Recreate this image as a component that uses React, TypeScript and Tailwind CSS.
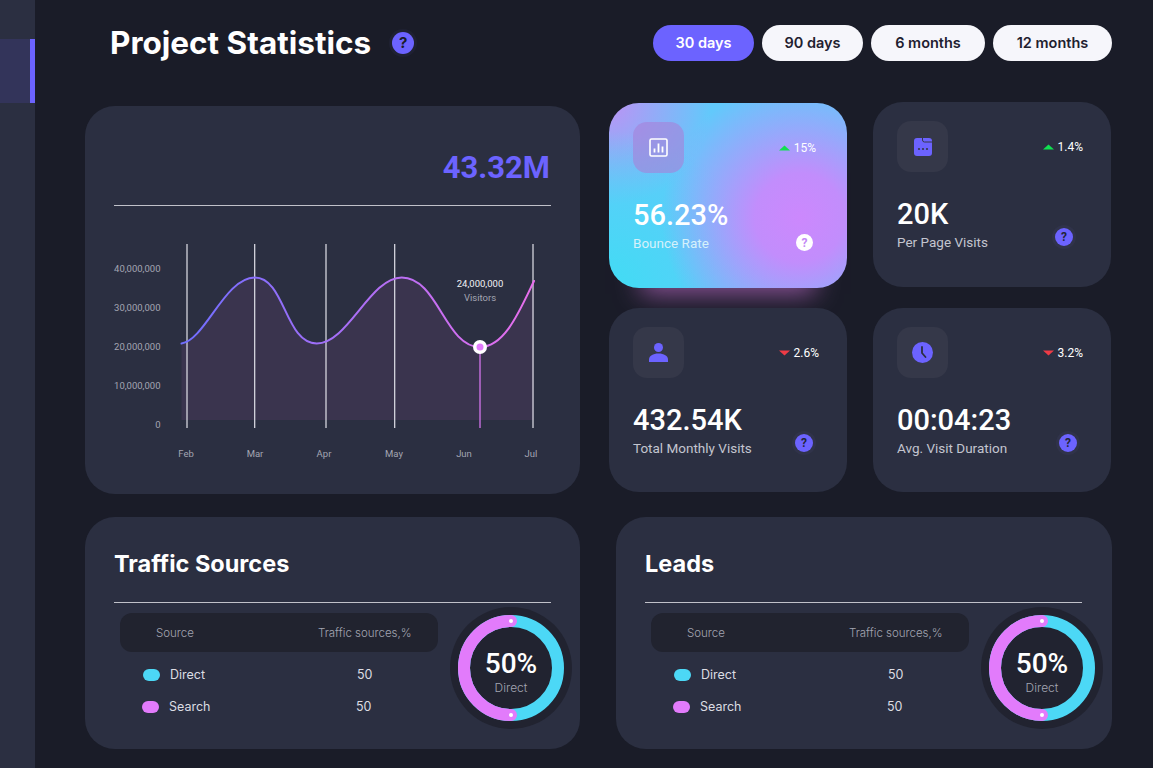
import type { ReactNode } from 'react';

function HelpBadge({ light = false }: { light?: boolean }) {
  if (light) {
    return (
      <span className="flex h-[17px] w-[17px] items-center justify-center rounded-full bg-white text-[12px] font-bold text-[#c48bf5]">
        ?
      </span>
    );
  }
  return (
    <span className="flex h-[24px] w-[24px] items-center justify-center rounded-full bg-[#30334a]">
      <span className="flex h-[18px] w-[18px] items-center justify-center rounded-full bg-[#6c63ff] text-[12px] font-bold text-[#23253a]">
        ?
      </span>
    </span>
  );
}

function Delta({ value, up }: { value: string; up: boolean }) {
  return (
    <div className="flex items-center gap-[4px]">
      <svg width="11" height="6" viewBox="0 0 11 6">
        {up ? <path d="M0 5.500 L5.500 0.500 L11 5.500Z" fill="#10e050" /> : <path d="M0 .5 L11 .5 L5.500 5.500Z" fill="#ee3b46" />}
      </svg>
      <span className="text-[12px] leading-none [font-weight:450]">{value}</span>
    </div>
  );
}

type TileProps = {
  icon: ReactNode;
  value: string;
  label: string;
  delta: string;
  up: boolean;
  badgeClass: string;
  className: string;
};

function Tile({ icon, value, label, delta, up, badgeClass, className }: TileProps) {
  return (
    <div className={`rounded-[30px] bg-[#2b2f41] pl-[24px] pt-[19px] text-white ${className}`}>
      <div className="flex h-[51px] items-center justify-between pr-[28px]">
        <div className="flex h-[51px] w-[51px] items-center justify-center rounded-[14px] bg-[#353849]">{icon}</div>
        <Delta value={delta} up={up} />
      </div>
      <div className="mt-[25px] flex items-end justify-between">
        <div>
          <div className="text-[29px] font-medium leading-[34px]">{value}</div>
          <div className="mt-[2px] text-[13.5px] leading-[18px] text-[#c3c5cf]">{label}</div>
        </div>
        <div className={badgeClass}>
          <HelpBadge />
        </div>
      </div>
    </div>
  );
}

function Donut() {
  return (
    <div className="relative h-[122px] w-[122px] shrink-0">
      <svg width="122" height="122" viewBox="0 0 122 122">
        <circle cx="61" cy="61" r="61" fill="#212330" />
        <circle cx="61" cy="61" r="47" fill="none" stroke="#4cd8f6" strokeWidth="12" />
        <path d="M61 14 A47 47 0 0 0 61 108" fill="none" stroke="#e27bfb" strokeWidth="12" strokeLinecap="round" />
        <circle cx="61" cy="14" r="2" fill="#fff" />
        <circle cx="61" cy="108" r="2" fill="#fff" />
      </svg>
      <div className="absolute inset-0 flex flex-col items-center pt-[43px] font-['Roboto',sans-serif] text-white">
        <span className="text-[28px] font-medium leading-[28px]">50%</span>
        <span className="mt-[3px] font-['Inter',sans-serif] text-[12px] font-light leading-[14px] text-[#a3a5b2]">Direct</span>
      </div>
    </div>
  );
}

function SourceCard({ title, className }: { title: string; className: string }) {
  return (
    <div className={`h-[232px] rounded-[30px] bg-[#2b2f41] font-['Inter',sans-serif] ${className}`}>
      <h2 className="pl-[29px] pt-[32px] text-[23.5px] font-bold leading-[30px] text-white">{title}</h2>
      <div className="ml-[29px] mt-[23px] h-px w-[437px] bg-[#c0c1c9]" />
      <div className="mt-[4px] flex items-start pl-[35px]">
        <div className="mt-[6px] w-[318px] text-[12.5px]">
          <div className="flex h-[39px] items-center rounded-[12px] bg-[#21232f] pl-[36px] pt-[3px] text-[11.5px] font-light text-[#a3a5b2]">
            <span className="w-[162px]">Source</span>
            <span>Traffic sources,%</span>
          </div>
          <div className="mt-[14px] flex h-[18px] items-center pl-[23px] text-[#dcdde3]">
            <span className="h-[12px] w-[17px] rounded-[6px] bg-[#4cd8f6]" />
            <span className="ml-[10px] w-[187px]">Direct</span>
            <span>50</span>
          </div>
          <div className="mt-[14px] flex h-[18px] items-center pl-[22px] text-[#dcdde3]">
            <span className="h-[12px] w-[17px] rounded-[6px] bg-[#e27bfb]" />
            <span className="ml-[10px] w-[187px]">Search</span>
            <span>50</span>
          </div>
        </div>
        <div className="ml-[12px]">
          <Donut />
        </div>
      </div>
    </div>
  );
}

const curve =
  'M181.500 343.500 C205 340 225 277.500 254.700 277.500 C285 277.500 285 343.500 316.700 343.500 C348 343.500 370 277.500 401.700 277.500 C438 277.500 445 347 480 347 C505 347 520 310 534 281';

function VisitsChart() {
  const gridX = [187, 254.7, 326, 394.7, 533];
  const yLabels = [
    ['40,000,000', 272],
    ['30,000,000', 311],
    ['20,000,000', 350],
    ['10,000,000', 389],
    ['0', 428],
  ] as const;
  const xLabels = [
    ['Feb', 186],
    ['Mar', 255],
    ['Apr', 324],
    ['May', 394],
    ['Jun', 464],
    ['Jul', 531],
  ] as const;
  return (
    <svg width="495" height="288" viewBox="85 206 495 288" className="block">
      <defs>
        <linearGradient id="stroke" x1="181" x2="534" y1="0" y2="0" gradientUnits="userSpaceOnUse">
          <stop offset="0" stopColor="#6f6eff" />
          <stop offset="1" stopColor="#e86fec" />
        </linearGradient>
      </defs>
      <path d={`${curve} L534 420 L181.500 420 Z`} fill="#3a344e" />
      {gridX.map((x) => (
        <line key={x} x1={x} x2={x} y1="244" y2="428" stroke="#e2e2ea" strokeWidth="1.2" />
      ))}
      <line x1="480" x2="480" y1="347" y2="428" stroke="#e27bfb" strokeWidth="1.2" />
      <path d={curve} fill="none" stroke="url(#stroke)" strokeWidth="2" strokeLinecap="round" />
      <circle cx="480" cy="347" r="7" fill="#fff" />
      <circle cx="480" cy="347" r="3.500" fill="#e27bfb" />
      <g fontSize="9.500" fill="#a3a5b2" fontFamily="Roboto, sans-serif">
        {yLabels.map(([t, y]) => (
          <text key={t} x="160.500" y={y} textAnchor="end">
            {t}
          </text>
        ))}
        {xLabels.map(([t, x]) => (
          <text key={t} x={x} y="457" textAnchor="middle">
            {t}
          </text>
        ))}
        <text x="480" y="287" textAnchor="middle" fill="#f1f1f5">
          24,000,000
        </text>
        <text x="480" y="300.500" textAnchor="middle">
          Visitors
        </text>
      </g>
    </svg>
  );
}

export default function App() {
  const ranges = [
    { label: '30 days', w: 'w-[101px]', active: true },
    { label: '90 days', w: 'w-[101px]', active: false },
    { label: '6 months', w: 'w-[114px]', active: false },
    { label: '12 months', w: 'w-[119px]', active: false },
  ];

  return (
    <div className="flex h-[768px] w-full overflow-hidden bg-[#1a1c28] font-['Roboto',sans-serif]">
      <aside className="w-[35px] shrink-0 bg-[#2b2f41] pt-[39px]">
        <div className="h-[64px] border-r-[5px] border-[#6c63ff] bg-[#33345a]" />
      </aside>

      <main className="w-[1077px] pl-[50px]">
        <header className="flex h-[61px] items-end justify-between pl-[25px]">
          <div className="flex h-[36px] items-center font-['Inter',sans-serif]">
            <h1 className="text-[31.500px] font-bold text-white">Project Statistics</h1>
            <span className="ml-[18px] flex h-[28px] w-[28px] items-center justify-center rounded-full bg-[#1f2132]">
              <span className="flex h-[22px] w-[22px] items-center justify-center rounded-full bg-[#6c63ff] text-[15px] font-bold text-[#1a1c28]">
                ?
              </span>
            </span>
          </div>
          <div className="flex gap-[8px] font-['Inter',sans-serif]">
            {ranges.map((r) =>
              r.active ? (
                <button key={r.label} className={`h-[36px] rounded-[18px] bg-[#6c63ff] text-[14.500px] font-semibold text-white ${r.w}`}>
                  {r.label}
                </button>
              ) : (
                <button key={r.label} className={`h-[36px] rounded-[18px] bg-[#f6f6fb] text-[14.500px] font-semibold text-[#1f2130] ${r.w}`}>
                  {r.label}
                </button>
              ),
            )}
          </div>
        </header>

        <div className="mt-[41px] flex items-start">
          <section className="mt-[4px] h-[388px] w-[495px] rounded-[30px] bg-[#2b2f41]">
            <div className="pr-[30px] pt-[43px] text-right text-[31px] font-bold leading-[38px] text-[#6c63ff]">43.32M</div>
            <div className="ml-[29px] mt-[18px] h-px w-[437px] bg-[#c0c1c9]" />
            <VisitsChart />
          </section>

          <div className="ml-[29px] grid w-[502px] grid-cols-[238px_238px] gap-x-[26px] gap-y-[20px]">
            <div className="mt-px h-[185px] rounded-[30px] bg-[radial-gradient(circle_at_80%_62%,#cc88fd_0%,#c28dfc_20%,rgba(192,142,252,0)_62%),radial-gradient(circle_at_0%_100%,#41dcf4_0%,rgba(65,220,244,0)_52%),radial-gradient(circle_at_0%_0%,#bd92f4_0%,rgba(185,149,245,0)_34%),linear-gradient(#62c9fb,#62c9fb)] pl-[24px] pt-[19px] text-white shadow-[0_38px_24px_-32px_#8a5296]">
              <div className="flex h-[51px] items-center justify-between pr-[31px]">
                <div className="flex h-[51px] w-[51px] items-center justify-center rounded-[14px] bg-[#a680d8]/60">
                  <svg width="19" height="19" viewBox="0 0 19 19" fill="none" stroke="#fff">
                    <rect x="1" y="1" width="17" height="17" rx="1.500" strokeWidth="1.600" />
                    <path d="M5.500 14.500v-4M9.500 14.500v-9M13.500 14.500v-6" strokeWidth="1.800" />
                  </svg>
                </div>
                <Delta value="15%" up />
              </div>
              <div className="mt-[25px] flex items-end justify-between">
                <div>
                  <div className="text-[29px] font-medium leading-[34px]">56.23%</div>
                  <div className="mt-[2px] text-[13.500px] leading-[18px] text-[#d5f1fb]">Bounce Rate</div>
                </div>
                <div className="mb-[1px] mr-[34px]">
                  <HelpBadge light />
                </div>
              </div>
            </div>

            <Tile
              value="20K"
              label="Per Page Visits"
              delta="1.4%"
              up
              className="h-[185px]"
              badgeClass="mb-[2px] mr-[35px]"
              icon={
                <svg width="18" height="18" viewBox="0 0 18 18">
                  <rect width="18" height="18" rx="3" fill="#6c63ff" />
                  <path d="M8.500 0v2a2 2 0 0 0 2 2H18" fill="none" stroke="#353849" strokeWidth="1" />
                  <circle cx="5" cy="11" r="1.100" fill="#353849" />
                  <circle cx="9" cy="11" r="1.100" fill="#353849" />
                  <circle cx="13" cy="11" r="1.100" fill="#353849" />
                </svg>
              }
            />

            <Tile
              value="432.54K"
              label="Total Monthly Visits"
              delta="2.6%"
              up={false}
              className="h-[184px]"
              badgeClass="mb-[2px] mr-[31px]"
              icon={
                <svg width="19" height="19" viewBox="0 0 19 19" fill="#6c63ff">
                  <circle cx="9.500" cy="4.500" r="4.500" />
                  <path d="M0 19v-2.500C0 13 4 10.500 9.500 10.500S19 13 19 16.500V19Z" />
                </svg>
              }
            />

            <Tile
              value="00:04:23"
              label="Avg. Visit Duration"
              delta="3.2%"
              up={false}
              className="h-[184px]"
              badgeClass="mb-[2px] mr-[31px]"
              icon={
                <svg width="21" height="21" viewBox="0 0 21 21">
                  <circle cx="10.500" cy="10.500" r="10.500" fill="#6c63ff" />
                  <path d="M10 5v6l3.500 4" fill="none" stroke="#2b2f41" strokeWidth="1.800" strokeLinecap="round" />
                </svg>
              }
            />
          </div>
        </div>

        <div className="mt-[23px] flex gap-[36px]">
          <SourceCard title="Traffic Sources" className="w-[495px]" />
          <SourceCard title="Leads" className="w-[496px]" />
        </div>
      </main>
    </div>
  );
}
